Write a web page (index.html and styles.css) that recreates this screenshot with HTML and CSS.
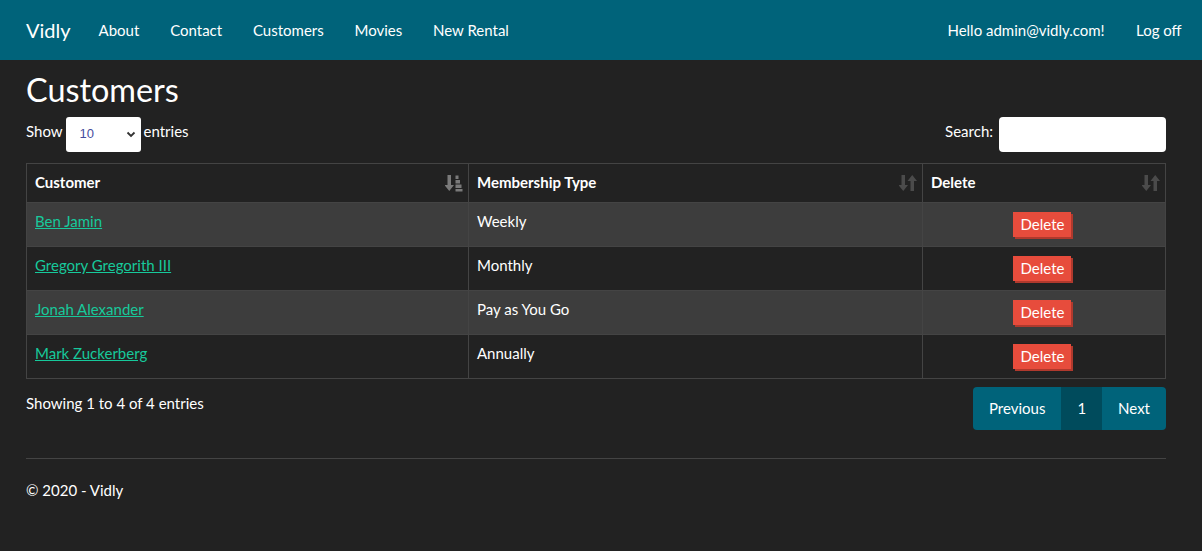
FILE: index.html
```html
<!DOCTYPE html>
<html>
<head>
<meta charset="utf-8">
<title>Customers - Vidly</title>
<link rel="stylesheet" href="styles.css">
</head>
<body>
<nav class="navbar">
  <div class="nav-inner">
    <div class="nav-left">
      <a class="brand" href="#">Vidly</a>
      <ul class="nav-links">
        <li><a href="#">About</a></li>
        <li><a href="#">Contact</a></li>
        <li><a href="#">Customers</a></li>
        <li><a href="#">Movies</a></li>
        <li><a href="#">New Rental</a></li>
      </ul>
    </div>
    <ul class="nav-links nav-right">
      <li><a href="#">Hello admin@vidly.com!</a></li>
      <li><a href="#">Log off</a></li>
    </ul>
  </div>
</nav>

<main class="container">
  <h2 class="title">Customers</h2>
  <div class="controls">
    <label class="length"><span class="lbl">Show</span>
      <span class="select">10<svg width="10" height="7" viewBox="0 0 10 7"><path d="M1.5 1.5 L5 5 L8.5 1.5" fill="none" stroke="#333" stroke-width="1.8"/></svg></span>
      <span class="lbl">entries</span></label>
    <label class="search"><span class="lbl">Search:</span> <span class="input"></span></label>
  </div>

  <table class="table">
    <thead>
      <tr>
        <th class="c1">Customer
          <svg class="sort" width="18" height="18" viewBox="0 0 18 18"><path d="M2.5 1h3.5v10h3l-4.75 6l-4.75-6h3z" fill="#7a7a7a"/><rect x="10.5" y="1.5" width="3" height="3.5" fill="#7a7a7a"/><rect x="10.5" y="6" width="4.5" height="3.5" fill="#7a7a7a"/><rect x="10.5" y="10.5" width="6" height="3.5" fill="#7a7a7a"/><rect x="10.5" y="15" width="7" height="2.5" fill="#7a7a7a"/></svg>
        </th>
        <th class="c2">Membership Type
          <svg class="sort" width="18" height="18" viewBox="0 0 18 18"><path d="M2.5 1h3.5v10h3l-4.75 6l-4.75-6h3z" fill="#4b4b4b"/><path d="M11.5 17h3.5V7h3l-4.75-6l-4.75 6h3z" fill="#4b4b4b"/></svg>
        </th>
        <th class="c3">Delete
          <svg class="sort" width="18" height="18" viewBox="0 0 18 18"><path d="M2.5 1h3.5v10h3l-4.75 6l-4.75-6h3z" fill="#4b4b4b"/><path d="M11.5 17h3.5V7h3l-4.75-6l-4.75 6h3z" fill="#4b4b4b"/></svg>
        </th>
      </tr>
    </thead>
    <tbody>
      <tr class="odd"><td><a href="#">Ben Jamin</a></td><td>Weekly</td><td class="center"><button class="btn-del">Delete</button></td></tr>
      <tr><td><a href="#">Gregory Gregorith III</a></td><td>Monthly</td><td class="center"><button class="btn-del">Delete</button></td></tr>
      <tr class="odd"><td><a href="#">Jonah Alexander</a></td><td>Pay as You Go</td><td class="center"><button class="btn-del">Delete</button></td></tr>
      <tr><td><a href="#">Mark Zuckerberg</a></td><td>Annually</td><td class="center"><button class="btn-del">Delete</button></td></tr>
    </tbody>
  </table>

  <div class="table-footer">
    <div class="info">Showing 1 to 4 of 4 entries</div>
    <div class="pagination">
      <a href="#" class="page">Previous</a>
      <a href="#" class="page active">1</a>
      <a href="#" class="page">Next</a>
    </div>
  </div>

  <hr class="rule">
  <footer class="footer">© 2020 - Vidly</footer>
</main>
</body>
</html>
```

FILE: styles.css
```css
* { box-sizing: border-box; }
html, body { margin: 0; padding: 0; }
body {
  background: #222222;
  color: #ffffff;
  font-family: Lato, "Liberation Sans", sans-serif;
  font-size: 15px;
  line-height: 1.42857;
}
a { color: #17c99b; }
ul { list-style: none; margin: 0; padding: 0; }

.navbar { background: #00637a; height: 60px; }
.nav-inner {
  margin: 0 26px 0 26px;
  height: 60px;
  display: flex;
  justify-content: space-between;
  align-items: center;
}
.nav-left { display: flex; align-items: center; }
.brand {
  color: #fff;
  text-decoration: none;
  font-size: 20px;
  margin-right: 13px;
  line-height: 60px;
}
.nav-links { display: flex; }
.nav-links a {
  color: #fff;
  text-decoration: none;
  display: block;
  padding: 0 15.4px;
  line-height: 60px;
}
.nav-left .nav-links li:first-child a { padding-left: 15px; }
.nav-right { margin-right: -21px; }
.nav-right li:first-child a { padding-right: 16px; }

.container { margin: 0 36px 0 26px; }
.title {
  font-size: 32.4px;
  font-weight: 400;
  line-height: 1.1;
  margin: 12px 0 9px;
}
.controls {
  display: flex;
  justify-content: space-between;
  align-items: center;
  margin-bottom: 11px;
}
.length, .search { display: flex; align-items: center; }
.lbl { margin-bottom: 4px; }
.select {
  display: inline-flex;
  align-items: center;
  justify-content: space-between;
  width: 75px;
  height: 35px;
  margin: 0 3px 0 3px;
  padding: 0 5px 0 14px;
  background: #fff;
  color: #464e9e;
  border-radius: 3px;
  font-family: "Liberation Sans", Arial, sans-serif;
  font-size: 13px;
}
.input {
  display: inline-block;
  width: 167px;
  height: 35px;
  margin-left: 6px;
  background: #fff;
  border-radius: 4px;
}

.table {
  width: 100%;
  border-collapse: collapse;
  border: 1px solid #444;
}
.table th, .table td {
  border: 1px solid #444;
  padding: 8px;
  text-align: left;
  vertical-align: top;
}
.table th {
  position: relative;
  height: 39px;
  padding: 8px 8px 8px;
  font-weight: 700;
  border-bottom: 1px solid #444;
}
.table td { height: 44px; padding-top: 8px; }
.table .c1 { width: 442px; }
.table .c2 { width: 454px; }
.sort { position: absolute; right: 5px; top: 10px; }
.table tr.odd td { background: #3d3d3d; }
.table td.center { text-align: center; padding-top: 9px; padding-right: 12px; }
.btn-del {
  background: #e74c3c;
  color: #fff;
  border: none;
  box-shadow: 2px 2px 0 #b0392d;
  font-family: Lato, "Liberation Sans", sans-serif;
  font-size: 15px;
  height: 25px;
  padding: 0 7px 0 8px;
  line-height: 25px;
  cursor: pointer;
}

.table-footer {
  display: flex;
  justify-content: space-between;
  align-items: flex-start;
  margin-top: 15px;
}
.info { margin-top: -1px; }
.pagination {
  display: flex;
  margin-top: -7px;
  border-radius: 4px;
  overflow: hidden;
}
.page {
  background: #00637a;
  color: #fff;
  text-decoration: none;
  height: 43px;
  line-height: 43px;
  padding: 0 16px;
}
.page.active { background: #004b5c; }

.rule {
  border: 0;
  border-top: 1px solid #444;
  margin: 28px 0 0;
}
.footer { margin-top: 21px; }
```
